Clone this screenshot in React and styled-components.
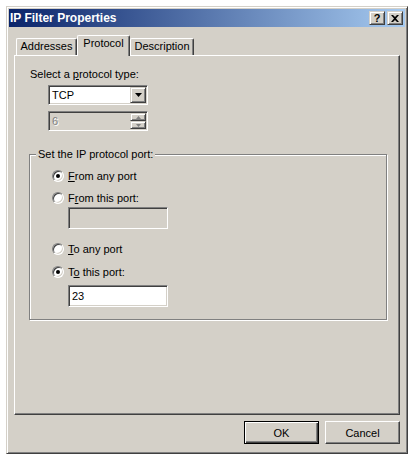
import styled, { createGlobalStyle } from 'styled-components';

const FACE = '#d4d0c8';

const GlobalStyle = createGlobalStyle`
  body {
    margin: 0;
    background: #fff;
    font-family: "Liberation Sans", Arial, sans-serif;
    font-size: 11px;
    color: #000;
  }
`;

const Window = styled.div`
  margin: 6px 0 0 6px;
  width: 402px;
  height: 448px;
  box-sizing: border-box;
  background: ${FACE};
  border: 1px solid;
  border-color: ${FACE} #404040 #404040 ${FACE};
  box-shadow: inset 1px 1px #fff, inset -1px -1px #808080;
  padding: 2px;
  display: flex;
  flex-direction: column;
`;

const TitleBar = styled.div`
  height: 18px;
  display: flex;
  align-items: center;
  justify-content: space-between;
  padding: 0 2px 0 1px;
  background: linear-gradient(to right, #0a246a, #a6caf0);
`;

const Title = styled.span`
  color: #fff;
  font-weight: bold;
  font-size: 12px;
  line-height: 18px;
`;

const CaptionButtons = styled.div`
  display: flex;
  gap: 2px;
`;

const CaptionButton = styled.div`
  width: 16px;
  height: 14px;
  box-sizing: border-box;
  background: ${FACE};
  border: 1px solid;
  border-color: ${FACE} #404040 #404040 ${FACE};
  box-shadow: inset 1px 1px #fff, inset -1px -1px #808080;
  display: flex;
  align-items: center;
  justify-content: center;
  font-weight: bold;
  font-size: 11px;
  line-height: 12px;
`;

const Body = styled.div`
  flex: 1;
  display: flex;
  flex-direction: column;
  padding: 8px 5px 7px;
`;

const TabList = styled.div`
  display: flex;
  align-items: flex-end;
  height: 20px;
  padding-left: 2px;
  position: relative;
  z-index: 1;
`;

const Tab = styled.div`
  box-sizing: border-box;
  width: ${(p) => p.$w}px;
  height: ${(p) => (p.$active ? 21 : 17)}px;
  margin-bottom: ${(p) => (p.$active ? -1 : 0)}px;
  background: ${FACE};
  border-top: 1px solid #fff;
  border-left: 1px solid #fff;
  border-right: 1px solid #404040;
  box-shadow: inset -1px 0 #808080;
  border-radius: 2px 2px 0 0;
  padding-top: 1px;
  line-height: 13px;
  text-align: center;
`;

const Panel = styled.div`
  height: 360px;
  box-sizing: border-box;
  border: 1px solid;
  border-color: #fff #404040 #404040 #fff;
  box-shadow: inset -1px -1px #808080;
  padding: 12px 12px 0 14px;
  display: flex;
  flex-direction: column;
  align-items: flex-start;
`;

const Label = styled.div`
  padding-left: 1px;
  line-height: 13px;
`;

const Field = styled.div`
  box-sizing: border-box;
  width: 100px;
  height: ${(p) => p.$h || 20}px;
  margin-top: ${(p) => p.$mt || 0}px;
  margin-left: ${(p) => p.$ml || 0}px;
  background: ${(p) => (p.$disabled ? FACE : '#fff')};
  color: ${(p) => (p.$disabled ? '#808080' : '#000')};
  text-shadow: ${(p) => (p.$disabled ? '1px 1px #fff' : 'none')};
  border: 1px solid;
  border-color: #808080 #fff #fff #808080;
  box-shadow: inset 1px 1px #404040, inset -1px -1px ${FACE};
  padding: 1px 1px 1px 3px;
  display: flex;
  align-items: center;
  justify-content: space-between;
  line-height: 13px;
`;

const DropButton = styled.div`
  width: 16px;
  height: 16px;
  box-sizing: border-box;
  background: ${FACE};
  border: 1px solid;
  border-color: ${FACE} #404040 #404040 ${FACE};
  box-shadow: inset 1px 1px #fff, inset -1px -1px #808080;
  display: flex;
  align-items: center;
  justify-content: center;
`;

const SpinButtons = styled.div`
  display: flex;
  flex-direction: column;
  align-self: stretch;
`;

const SpinButton = styled(DropButton)`
  height: 8px;
`;

const Group = styled.div`
  align-self: stretch;
  margin-top: 23px;
  height: 166px;
  box-sizing: border-box;
  border: 1px solid #808080;
  box-shadow: inset 1px 1px #fff, 1px 1px #fff;
  padding-left: 6px;
  display: flex;
  flex-direction: column;
  align-items: flex-start;
`;

const GroupTitle = styled.span`
  margin-top: -7px;
  padding: 0 2px;
  background: ${FACE};
  line-height: 13px;
`;

const RadioRow = styled.div`
  display: flex;
  align-items: center;
  gap: 4px;
  height: 16px;
  margin-top: ${(p) => p.$mt}px;
  margin-left: 16px;
  line-height: 13px;
`;

const Radio = styled.span`
  width: 12px;
  height: 12px;
  box-sizing: border-box;
  border-radius: 50%;
  border: 1px solid;
  border-color: #808080 #fff #fff #808080;
  box-shadow: inset 1px 1px #404040, inset -1px -1px ${FACE};
  background: #fff;
  display: flex;
  align-items: center;
  justify-content: center;
  &::after {
    content: '';
    width: 4px;
    height: 4px;
    border-radius: 50%;
    background: #000;
    display: ${(p) => (p.$checked ? 'block' : 'none')};
  }
`;

const Footer = styled.div`
  display: flex;
  justify-content: flex-end;
  gap: 6px;
  margin-top: 6px;
`;

const Button = styled.div`
  width: 75px;
  height: 23px;
  box-sizing: border-box;
  display: flex;
  align-items: center;
  justify-content: center;
  border: 1px solid;
  border-color: ${(p) => (p.$default ? '#000' : '#fff #404040 #404040 #fff')};
  box-shadow: ${(p) =>
    p.$default
      ? 'inset 1px 1px #fff, inset -1px -1px #404040, inset -2px -2px #808080'
      : 'inset -1px -1px #808080'};
`;

const Arrow = ({ up, color = '#000', w = 7 }) => {
  const h = Math.ceil(w / 2);
  return (
    <svg width={w} height={h} viewBox={`0 0 ${w} ${h}`}>
      <polygon
        points={up ? `0,${h} ${w},${h} ${w / 2},0` : `0,0 ${w},0 ${w / 2},${h}`}
        fill={color}
      />
    </svg>
  );
};

const CloseGlyph = () => (
  <svg width="8" height="7" viewBox="0 0 8 7">
    <path d="M0 0h2l2 2 2-2h2L5 3.5 8 7H6L4 5 2 7H0l3-3.5z" fill="#000" />
  </svg>
);

export default function App() {
  return (
    <>
      <GlobalStyle />
      <Window>
        <TitleBar>
          <Title>IP Filter Properties</Title>
          <CaptionButtons>
            <CaptionButton>?</CaptionButton>
            <CaptionButton>
              <CloseGlyph />
            </CaptionButton>
          </CaptionButtons>
        </TitleBar>
        <Body>
          <TabList>
            <Tab $w={61}>Addresses</Tab>
            <Tab $w={53} $active>
              Protocol
            </Tab>
            <Tab $w={64}>Description</Tab>
          </TabList>
          <Panel>
            <Label>
              Select a <u>p</u>rotocol type:
            </Label>
            <Field $mt={4} $ml={19}>
              <span>TCP</span>
              <DropButton>
                <Arrow />
              </DropButton>
            </Field>
            <Field $mt={6} $ml={19} $disabled>
              <span>6</span>
              <SpinButtons>
                <SpinButton>
                  <Arrow up w={5} color="#808080" />
                </SpinButton>
                <SpinButton>
                  <Arrow w={5} color="#808080" />
                </SpinButton>
              </SpinButtons>
            </Field>
            <Group>
              <GroupTitle>Set the IP protocol port:</GroupTitle>
              <RadioRow $mt={7}>
                <Radio $checked />
                <span>
                  <u>F</u>rom any port
                </span>
              </RadioRow>
              <RadioRow $mt={6}>
                <Radio />
                <span>
                  F<u>r</u>om this port:
                </span>
              </RadioRow>
              <Field $mt={1} $ml={32} $h={22} $disabled />
              <RadioRow $mt={12}>
                <Radio />
                <span>
                  <u>T</u>o any port
                </span>
              </RadioRow>
              <RadioRow $mt={7}>
                <Radio $checked />
                <span>
                  T<u>o</u> this port:
                </span>
              </RadioRow>
              <Field $mt={5} $ml={32} $h={22}>
                <span>23</span>
              </Field>
            </Group>
          </Panel>
          <Footer>
            <Button $default>OK</Button>
            <Button>Cancel</Button>
          </Footer>
        </Body>
      </Window>
    </>
  );
}
